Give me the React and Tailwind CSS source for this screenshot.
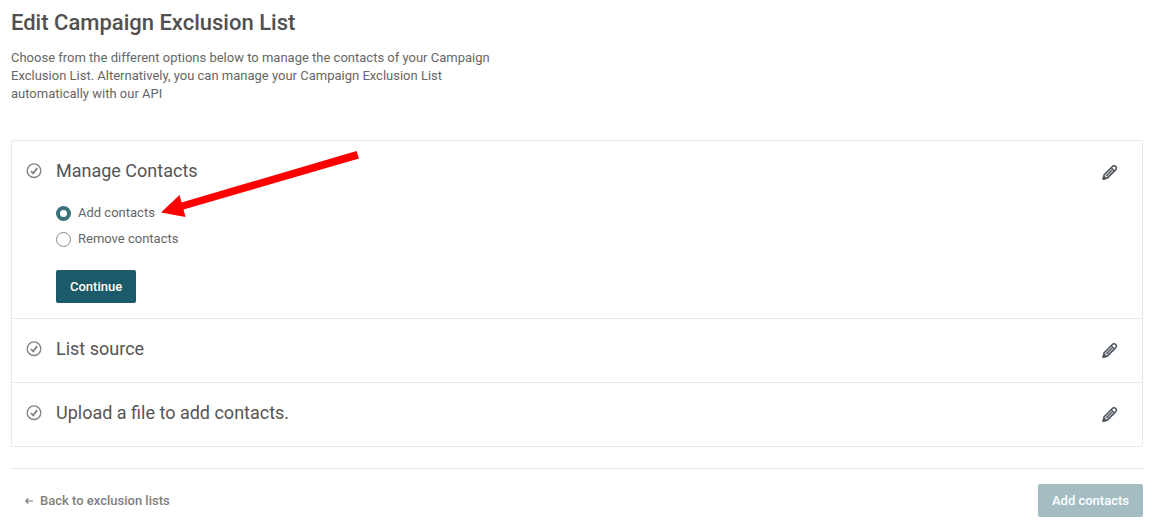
import { useState } from "react";

function CheckIcon() {
  return (
    <svg className="size-4 shrink-0" viewBox="0 0 16 16" fill="none" stroke="#858585" aria-hidden="true">
      <circle cx="8" cy="7.7" r="6.8" strokeWidth="1.4" />
      <path d="M4.9 8.1 7.2 10.3 11.2 5.2" strokeWidth="1.9" />
    </svg>
  );
}

function PencilIcon() {
  return (
    <svg className="size-4" viewBox="0 0 16 16" fill="none" stroke="#4b525a" strokeWidth="1.5" strokeLinejoin="round" aria-hidden="true">
      <path d="M1.2 15 2.1 10.8 10.2 2.7C11.3 1.6 12.7 1.5 13.7 2.5C14.7 3.5 14.6 4.9 13.5 6L5.4 14.1Z" />
      <path d="M9.2 3.7 12.5 7" strokeWidth="1.2" />
      <path d="M3.4 11.2 10 4.6M5 12.8 11.6 6.200" strokeWidth="0.5" />
      <path d="M4.200 12 10.800 5.400" strokeWidth="1.2" />
      <path d="M1.2 15 1.8 12.2 4 14.4Z" fill="#4b525a" />
    </svg>
  );
}

function BackArrow() {
  return (
    <svg className="h-2 w-2" viewBox="0 0 8 8" fill="none" stroke="#777777" strokeWidth="1.2" aria-hidden="true">
      <path d="M8 4H1M3.3 1.5.8 4l2.5 2.5" />
    </svg>
  );
}

function Pointer() {
  return (
    <svg className="pointer-events-none absolute top-[-54px] left-[5px] h-[68px] w-[200px]" viewBox="0 0 200 68" aria-hidden="true">
      <path d="M1 62.5 19.5 45 21.5 52.5 196.5 1 199 8.5 23.5 59.5 25.5 67Z" fill="#ff0000" />
    </svg>
  );
}

function Section({ title, children }) {
  return (
    <section className="border-b border-[#e9e9e9] pr-6 pl-[14px] last:border-b-0">
      <div className="flex items-center pt-4 pb-5">
        <CheckIcon />
        <h2 className="ml-[14px] flex-1 text-lg leading-[27px] text-[#555555]">{title}</h2>
        <button type="button" aria-label={"Edit " + title} className="mt-0.5 cursor-pointer">
          <PencilIcon />
        </button>
      </div>
      {children}
    </section>
  );
}

function Option({ label, checked, onChange, children }) {
  return (
    <div className="flex">
      <label className="flex items-center gap-[7px] text-[13px] leading-[18px] text-[#666666]">
        <input
          type="radio"
          name="contacts-action"
          checked={checked}
          onChange={onChange}
          className="size-[15px] appearance-none rounded-full border border-[#888888] bg-white checked:border-4 checked:border-[#39727b]"
        />
        {label}
      </label>
      {children}
    </div>
  );
}

export default function App() {
  const [action, setAction] = useState("add");
  return (
    <main className="bg-white pt-[9px] pr-[11px] pb-3 pl-[11px] font-['Roboto',sans-serif]">
      <h1 className="text-[22px] leading-7 font-medium text-[#505050]">Edit Campaign Exclusion List</h1>
      <p className="mt-3 max-w-[480px] text-[13px] leading-[18px] text-[#666666]">
        Choose from the different options below to manage the contacts of your Campaign Exclusion List. Alternatively,
        you can manage your Campaign Exclusion List automatically with our API
      </p>

      <div className="mt-[37px] rounded-xs border border-[#e9e9e9]">
        <Section title="Manage Contacts">
          <div className="ml-[30px] pb-[15px]">
            <fieldset aria-label="Manage Contacts" className="flex flex-col gap-2">
              <Option label="Add contacts" checked={action === "add"} onChange={() => setAction("add")}>
                <span className="relative">
                  <Pointer />
                </span>
              </Option>
              <Option label="Remove contacts" checked={action === "remove"} onChange={() => setAction("remove")} />
            </fieldset>
            <button
              type="button"
              className="mt-[22px] h-[33px] cursor-pointer rounded-xs bg-[#1b5a68] px-[14px] text-[13px] font-medium text-white"
            >
              Continue
            </button>
          </div>
        </Section>
        <Section title="List source" />
        <Section title="Upload a file to add contacts." />
      </div>

      <footer className="mt-[21px] flex items-center justify-between border-t border-[#e9e9e9] pt-[15px]">
        <a href="#lists" className="ml-[14px] flex items-center gap-[7px] text-[13px] font-medium text-[#808080]">
          <BackArrow />
          Back to exclusion lists
        </a>
        <button type="button" disabled className="h-[33px] rounded-xs bg-[#a4bdc3] px-[14px] text-[13px] font-medium text-white">
          Add contacts
        </button>
      </footer>
    </main>
  );
}
